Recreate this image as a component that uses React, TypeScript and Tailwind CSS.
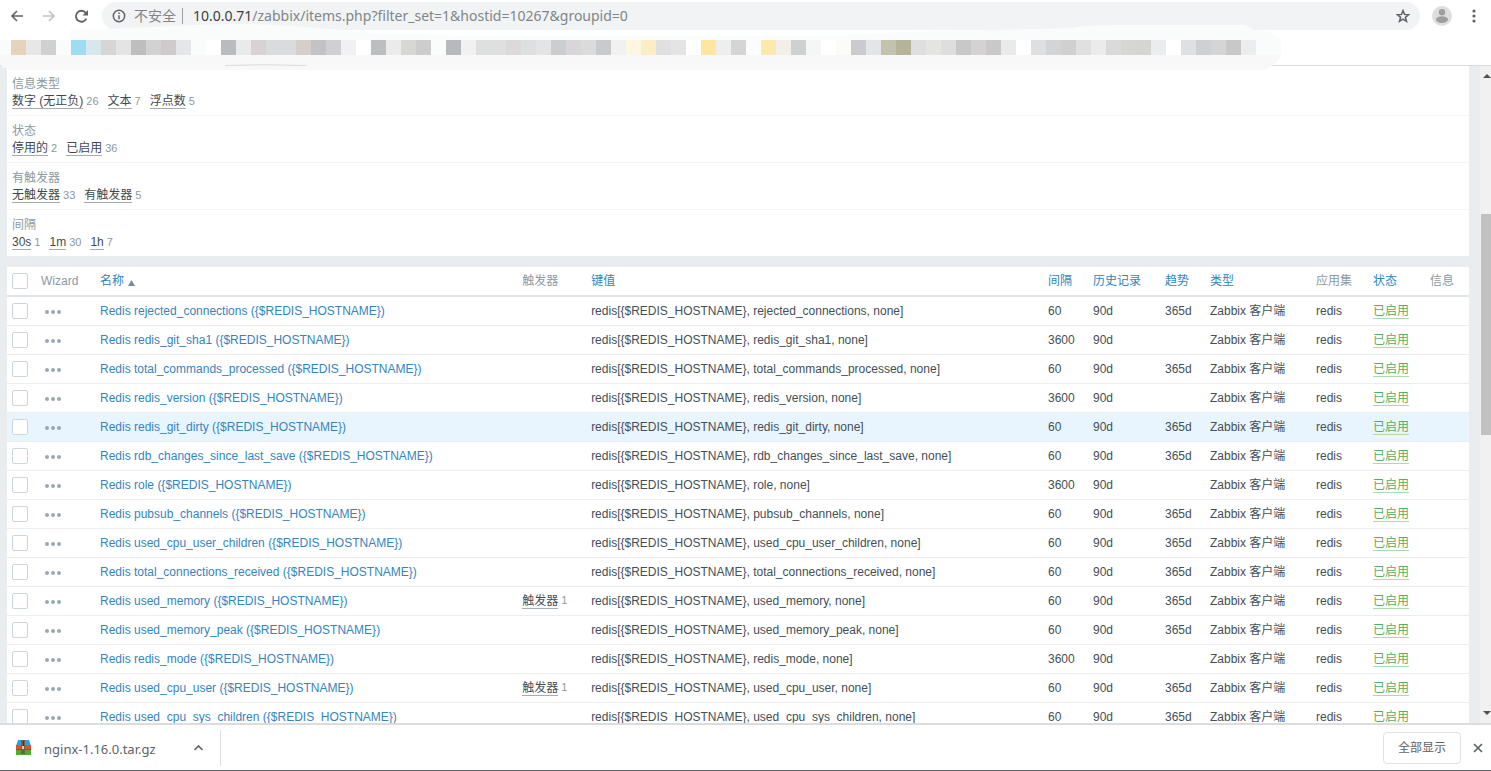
import React from "react"

interface Item {
  name: string
  interval: string
  trends?: string
  triggers?: number
  active?: boolean
}

interface FilterGroup {
  label: string
  options: Array<{ text: string; count: number }>
}

const filterGroups: FilterGroup[] = [
  {
    label: "信息类型",
    options: [
      { text: "数字 (无正负)", count: 26 },
      { text: "文本", count: 7 },
      { text: "浮点数", count: 5 },
    ],
  },
  {
    label: "状态",
    options: [
      { text: "停用的", count: 2 },
      { text: "已启用", count: 36 },
    ],
  },
  {
    label: "有触发器",
    options: [
      { text: "无触发器", count: 33 },
      { text: "有触发器", count: 5 },
    ],
  },
  {
    label: "间隔",
    options: [
      { text: "30s", count: 1 },
      { text: "1m", count: 30 },
      { text: "1h", count: 7 },
    ],
  },
]

const items: Item[] = [
  { name: "rejected_connections", interval: "60", trends: "365d" },
  { name: "redis_git_sha1", interval: "3600" },
  { name: "total_commands_processed", interval: "60", trends: "365d" },
  { name: "redis_version", interval: "3600" },
  { name: "redis_git_dirty", interval: "60", trends: "365d", active: true },
  { name: "rdb_changes_since_last_save", interval: "60", trends: "365d" },
  { name: "role", interval: "3600" },
  { name: "pubsub_channels", interval: "60", trends: "365d" },
  { name: "used_cpu_user_children", interval: "60", trends: "365d" },
  { name: "total_connections_received", interval: "60", trends: "365d" },
  { name: "used_memory", interval: "60", trends: "365d", triggers: 1 },
  { name: "used_memory_peak", interval: "60", trends: "365d" },
  { name: "redis_mode", interval: "3600" },
  { name: "used_cpu_user", interval: "60", trends: "365d", triggers: 1 },
  { name: "used_cpu_sys_children", interval: "60", trends: "365d" },
]

const columns = [
  { title: "Wizard", width: "w-[59px]" },
  { title: "名称", width: "", sortable: true, sorted: true },
  { title: "触发器", width: "w-[69px]" },
  { title: "键值", width: "w-5/16", sortable: true },
  { title: "间隔", width: "w-[45px]", sortable: true },
  { title: "历史记录", width: "w-[72px]", sortable: true },
  { title: "趋势", width: "w-[45px]", sortable: true },
  { title: "类型", width: "w-[106px]", sortable: true },
  { title: "应用集", width: "w-[57px]" },
  { title: "状态", width: "w-[57px]", sortable: true },
  { title: "信息", width: "w-[44px]" },
]

// one colour per 15px block, "" leaves the bar visible
const blocks = [
  "#e6d3bd", "#e7e7e7", "#d0d0d0", "", "#9edcf2", "#d8e7ed", "#d6d6d6", "#e4e4e4", "#bebebe", "#d2d2d2",
  "#cfcbcc", "#e5e6e8", "", "#ffffff", "#b9bbbc", "#eaeaea", "#d7d3d4", "#dadbdd", "#dadbdd", "#d4cecd",
  "#c3c3c6", "#d0d0d2", "#f1f1f3", "#ffffff", "#bdbebf", "#ebebeb", "#d7d7d4", "#cdcdcd", "", "#b8b9be",
  "#f1f1f1", "#dee0df", "#dfdfdf", "#dbd9da", "#dedfe1", "#e4e4e4", "#cccdcf", "#d8d6d9", "#dbdbdb", "#c9cacb",
  "#f1f1f1", "#fdf6e0", "#fceec4", "#e0e0e0", "#e4e4e4", "#ffffff", "#fce6a0", "#eeeeee", "#d5d5d5", "#fafcfe",
  "#fde9ae", "#f2efe8", "#cfd0d2", "#f5f7f6", "#ffffff", "#fbfbfa", "#cbcbcd", "#e3e5e6", "#c3c2ad", "#b5b399",
  "#dfdfdf", "#e4e4e2", "#dedede", "#c8c8c8", "#d5d2d3", "#c9c9c9", "#e8eaec", "#ffffff", "#dddfe0", "#d2d4d6",
  "#d0d0d0", "#e0e0e0", "#ebebeb", "#dadada", "#d6d6d2", "#d5d5d4", "#ebecee", "#ffffff", "#dfe0e2", "#cfd0d2",
  "#d5d5d5", "#c8c8c8", "#ebedef",
]

function AddressBar() {
  return (
    <div className="flex h-8 items-center bg-white pr-[7px] pl-[7px]">
      <button aria-label="Back" className="flex w-5 justify-center">
        <svg width="14" height="14" viewBox="0 0 14 14" fill="none" stroke="#5f6368" strokeWidth="1.6">
          <path d="M13 7H2M7 2 2 7l5 5" />
        </svg>
      </button>
      <button aria-label="Forward" className="ml-3 flex w-5 justify-center">
        <svg width="14" height="14" viewBox="0 0 14 14" fill="none" stroke="#bdc1c6" strokeWidth="1.6">
          <path d="M1 7h11M7 2l5 5-5 5" />
        </svg>
      </button>
      <button aria-label="Reload" className="ml-3 flex w-5 justify-center">
        <svg width="15" height="15" viewBox="0 0 15 15" fill="none" stroke="#5f6368" strokeWidth="1.8">
          <path d="M12.400 9.600A5.500 5.500 0 1 1 11.700 3.800L13 5" />
          <path d="M14 1v5.500H8.500z" fill="#5f6368" stroke="none" />
        </svg>
      </button>
      <div className="ml-[11px] flex h-7 flex-1 items-center rounded-full bg-[#f1f3f4] pr-2.5 pl-2.5">
        <svg width="14" height="14" viewBox="0 0 14 14" fill="none" stroke="#5f6368" strokeWidth="1.5">
          <circle cx="7" cy="7" r="5.700" />
          <path d="M7 6.200v4M7 3.600v1.500" />
        </svg>
        <span className="ml-2 text-sm text-[#808488]">不安全</span>
        <span className="mr-2.5 ml-1.5 h-4 w-px bg-[#9a9da1]" />
        <a
          href="#items"
          className="flex-1 font-['Noto_Sans','Noto_Sans_CJK_SC',sans-serif] text-sm text-[#80868b]"
        >
          <span className="text-[#3c4043]">10.0.0.71</span>/zabbix/items.php?filter_set=1&amp;hostid=10267&amp;groupid=0
        </a>
        <button aria-label="Bookmark">
          <svg width="14" height="14" viewBox="0 0 14 14" fill="none" stroke="#5f6368" strokeWidth="1.5">
            <path d="m7 1.600 1.500 3.800 4.100.3-3.200 2.600 1.100 4L7 10.100l-3.500 2.200 1.100-4L1.400 5.700l4.100-.3z" />
          </svg>
        </button>
      </div>
      <button aria-label="Profile" className="ml-3">
        <svg width="20" height="20" viewBox="0 0 20 20">
          <circle cx="10" cy="10" r="10" fill="#dedede" />
          <circle cx="10" cy="6.200" r="3.200" fill="#9e9e9e" />
          <ellipse cx="10" cy="13.600" rx="6" ry="3.400" fill="#9e9e9e" />
        </svg>
      </button>
      <button aria-label="Menu" className="ml-3 flex w-5 justify-center">
        <svg width="4" height="14" viewBox="0 0 4 14" fill="#5f6368">
          <circle cx="2" cy="2" r="1.600" />
          <circle cx="2" cy="7" r="1.600" />
          <circle cx="2" cy="12" r="1.600" />
        </svg>
      </button>
    </div>
  )
}

function BookmarkBar() {
  return (
    <div className="relative z-10 h-[34px] border-b border-[#dcdcdc] bg-white pt-2">
      <svg className="absolute -top-2 left-0" width="1281" height="47" viewBox="0 0 1281 47" fill="none">
        <path
          d="M0 16H70V6C150 4 190 0 240 0S340 6 380 10L480 12H840C900 6 1000 7 1071 4Q1085 1 1110 1H1245L1255 6Q1272 7 1281 16V31H0z"
          fill="#fafbfb"
        />
        <path d="M0 31H1281Q1278 40 1264 46H16Q4 46 0 40z" fill="#f8f8f8" />
        <path d="M225 41.500Q265 40 306 41.500" stroke="#dcdcdc" />
      </svg>
      <div className="relative flex pl-[11px]">
        {blocks.map((color, index) => (
          <span key={index} className="h-[15px] w-[15px] shrink-0" style={{ backgroundColor: color || undefined }} />
        ))}
      </div>
    </div>
  )
}

function FilterPanel() {
  return (
    <section className="bg-white pt-[3px]">
      {filterGroups.map((group) => (
        <div
          key={group.label}
          className="h-[47px] border-b border-[#f2f4f5] px-[5px] pt-1.5 last:h-[46px] last:border-0"
        >
          <h3 className="leading-[18px] text-[#8b9aa3]">{group.label}</h3>
          <div className="flex gap-[9px]">
            {group.options.map((option) => (
              <span key={option.text} className="flex items-start gap-[3px]">
                <button className="border-b border-[#a5acb0] pt-0.5 leading-[13px] text-[#3f4a50]">
                  {option.text}
                </button>
                <span className="text-[11px] leading-4 text-[#8b9aa3]">{option.count}</span>
              </span>
            ))}
          </div>
        </div>
      ))}
    </section>
  )
}

function Checkbox({ label }: { label: string }) {
  return (
    <input
      type="checkbox"
      aria-label={label}
      className="block h-4 w-4 appearance-none rounded-xs border border-[#ccd5d9] bg-white"
    />
  )
}

function ItemsTable() {
  return (
    <table className="mt-[11px] w-full table-fixed bg-white text-left whitespace-nowrap text-[#444f55]">
      <thead>
        <tr className="h-[29px] border-b-2 border-[#dfe4e7]">
          <th className="w-[29px] pl-[5px]">
            <Checkbox label="全选" />
          </th>
          {columns.map((column) => (
            <th key={column.title} className={`pl-[5px] font-normal text-[#8b9aa3] ${column.width}`}>
              {column.sortable ? (
                <a href="#sort" className="inline-flex items-center gap-1 text-[#2e86c1]">
                  {column.title}
                  {column.sorted && (
                    <svg className="mt-1" width="7" height="6" viewBox="0 0 7 6" fill="#768d99">
                      <path d="M3.500 0 7 6H0z" />
                    </svg>
                  )}
                </a>
              ) : (
                column.title
              )}
            </th>
          ))}
        </tr>
      </thead>
      <tbody>
        {items.map((item) => (
          <tr
            key={item.name}
            className={`h-[29px] border-b border-[#ebeef0] *:pl-[5px] ${item.active ? "bg-[#e8f5ff]" : ""}`}
          >
            <td>
              <Checkbox label={item.name} />
            </td>
            <td>
              <button aria-label="Wizard" className="ml-1 flex gap-0.5 pt-0.5">
                <span className="h-1 w-1 rounded-full bg-[#9aa9b1]" />
                <span className="h-1 w-1 rounded-full bg-[#9aa9b1]" />
                <span className="h-1 w-1 rounded-full bg-[#9aa9b1]" />
              </button>
            </td>
            <td>
              <a href="#item" className="text-[#3585bd]">
                Redis {item.name} {"({$REDIS_HOSTNAME})"}
              </a>
            </td>
            <td>
              {item.triggers && (
                <span className="flex items-center gap-[3px]">
                  <button className="border-b border-[#a5acb0] pt-px leading-[14px]">触发器</button>
                  <span className="text-[11px] text-[#8b9aa3]">{item.triggers}</span>
                </span>
              )}
            </td>
            <td>
              {"redis[{$REDIS_HOSTNAME}, "}
              {item.name}, none]
            </td>
            <td>{item.interval}</td>
            <td>90d</td>
            <td>{item.trends}</td>
            <td>Zabbix 客户端</td>
            <td>redis</td>
            <td>
              <a href="#status" className="inline-block border-b border-[#a9dcad] pt-px leading-[14px] text-[#5aad5f]">
                已启用
              </a>
            </td>
            <td />
          </tr>
        ))}
      </tbody>
    </table>
  )
}

function Scrollbar() {
  return (
    <div className="flex w-[11px] shrink-0 flex-col items-end bg-[#f1f1f1]">
      <svg className="mt-2" width="8" height="4" viewBox="0 0 8 4" fill="#505050">
        <path d="M4 0 8 4H0z" />
      </svg>
      <div className="mt-[136px] h-[221px] w-2.5 bg-[#c1c1c1]" />
      <svg className="mt-auto mb-2" width="8" height="4" viewBox="0 0 8 4" fill="#505050">
        <path d="M0 0H8L4 4z" />
      </svg>
    </div>
  )
}

function DownloadShelf() {
  return (
    <footer className="flex h-12 shrink-0 items-center border-t-2 border-b border-t-[#dcdcdc] border-b-[#5c6262] bg-white pl-4 text-[#5f6368]">
      <svg width="15" height="15" viewBox="0 0 15 15">
        <path d="M2 0h11l2 6H0z" fill="#2f9fd8" />
        <path d="M0 5h15v5H0z" fill="#d9532c" />
        <path d="M0 10h15v5H0z" fill="#57a639" />
        <path d="M0 9h15v1H0z" fill="#000" opacity=".2" />
        <path d="M5 0h4v14H5z" fill="#6f5f4b" />
        <path d="M6 6h2v3H6z" fill="#e8d08a" />
        <path d="M7 1h1v5H7z" fill="#3d352b" />
      </svg>
      <a href="#download" className="ml-[13px] pt-1 font-['Noto_Sans',sans-serif] text-[13px]">
        nginx-1.16.0.tar.gz
      </a>
      <button aria-label="Options" className="ml-[37px]">
        <svg width="11" height="7" viewBox="0 0 11 7" fill="none" stroke="#5f6368" strokeWidth="1.600">
          <path d="m1.500 6 4-4 4 4" />
        </svg>
      </button>
      <span className="ml-4 h-9 w-px bg-[#dadce0]" />
      <button className="ml-auto h-8 rounded border border-[#dfe1e4] px-[14px] text-xs">全部显示</button>
      <button aria-label="Close" className="mr-2 ml-3">
        <svg width="10" height="10" viewBox="0 0 10 10" fill="none" stroke="#5f6368" strokeWidth="1.700">
          <path d="m1 1 8 8M9 1 1 9" />
        </svg>
      </button>
    </footer>
  )
}

export default function App() {
  return (
    <div className="flex h-screen flex-col overflow-hidden bg-[#e9edf0] font-['Liberation_Sans','Noto_Sans_CJK_SC',sans-serif] text-xs">
      <AddressBar />
      <BookmarkBar />
      <div className="flex min-h-0 flex-1">
        <main className="min-w-0 flex-1 overflow-hidden pr-[11px] pl-[7px]">
          <FilterPanel />
          <ItemsTable />
        </main>
        <Scrollbar />
      </div>
      <DownloadShelf />
    </div>
  )
}
